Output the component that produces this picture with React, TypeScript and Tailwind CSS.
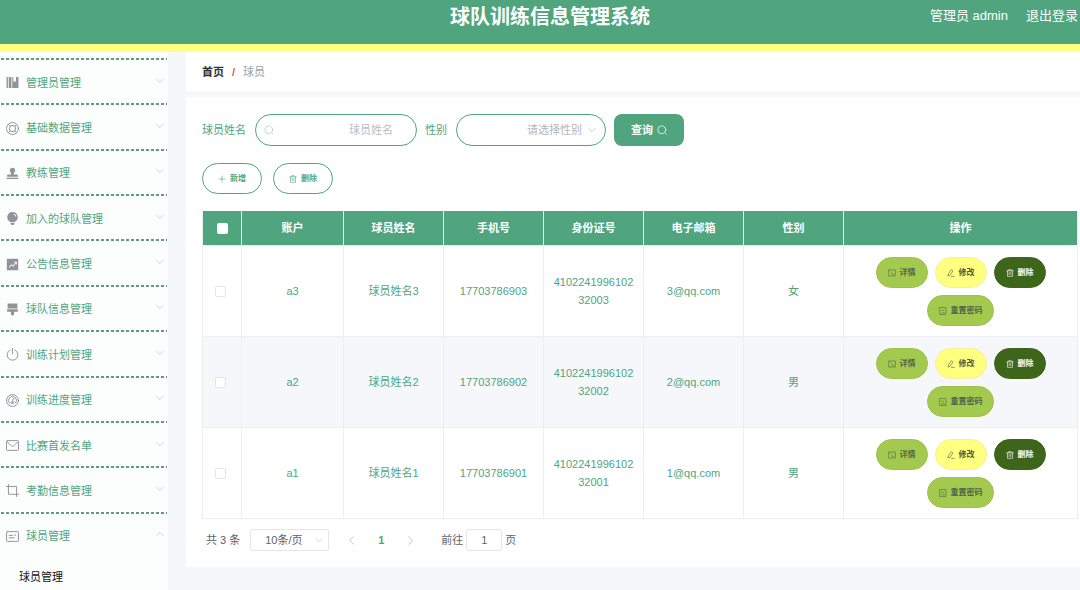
import type { ReactNode } from "react";

type IconProps = { className?: string; children?: ReactNode };

function Line({ className = "size-3", children }: IconProps) {
  return (
    <svg viewBox="0 0 24 24" className={className} fill="none" stroke="currentColor" strokeWidth="1.8" strokeLinecap="round" strokeLinejoin="round" aria-hidden="true">
      {children}
    </svg>
  );
}

function Solid({ className = "size-3", children }: IconProps) {
  return (
    <svg viewBox="0 0 24 24" className={className} fill="currentColor" aria-hidden="true">
      {children}
    </svg>
  );
}

const menuIcon = "size-[13px] shrink-0 text-[#909399]";

const menu: { label: string; icon: ReactNode }[] = [
  {
    label: "管理员管理",
    icon: (
      <Solid className={menuIcon}>
        <path d="M1 2h2.500v20H1zM5 2h5v20H5zM11.500 2h2v9l2.500-2 2.500 2V2H23v20H11.500z" />
      </Solid>
    ),
  },
  {
    label: "基础数据管理",
    icon: (
      <Line className={menuIcon}>
        <circle cx="12" cy="12" r="11" />
        <rect x="6.500" y="6.500" width="11" height="11" rx="4.500" />
        <path d="M4.500 4.500l3.500 3.500M19.500 4.500L16 8M4.500 19.500L8 16M19.500 19.500L16 16" />
      </Line>
    ),
  },
  {
    label: "教练管理",
    icon: (
      <Solid className={menuIcon}>
        <path d="M12 1.500a5 5 0 0 1 5 5c0 2.500-2.500 3.500-2.500 6V14H20a2 2 0 0 1 2 2v2H2v-2a2 2 0 0 1 2-2h5.500v-1.500c0-2.500-2.500-3.500-2.500-6a5 5 0 0 1 5-5zM1 20h22v2.200H1z" />
      </Solid>
    ),
  },
  {
    label: "加入的球队管理",
    icon: (
      <Solid className={menuIcon}>
        <path fillRule="evenodd" d="M12 0a9.500 9.500 0 0 1 5.500 17.300L16 19H8l-1.500-1.700A9.500 9.500 0 0 1 12 0zm2 3v1.800c2 .5 3 2 3.200 3.700H19C19 5.500 17 3.500 14 3zM8.500 20.300h7V22l-2 2h-3l-2-2z" />
      </Solid>
    ),
  },
  {
    label: "公告信息管理",
    icon: (
      <Solid className={menuIcon}>
        <path fillRule="evenodd" d="M1.500 1.500h21v21h-21zm3.500 15l1.200 1.200 4.300-4 3 2.300 5-6.500v2.300H20V7h-5v1.500h2.500l-4.200 5.300-3-2.300z" />
      </Solid>
    ),
  },
  {
    label: "球队信息管理",
    icon: (
      <Solid className={menuIcon}>
        <path d="M3 1h18v9H3zM2 11.500h20V16h-7v5l-3 2.500L9 21v-5H2z" />
      </Solid>
    ),
  },
  {
    label: "训练计划管理",
    icon: (
      <Line className={menuIcon}>
        <path d="M12 1v10M7.500 3.500a10 10 0 1 0 9 0" />
      </Line>
    ),
  },
  {
    label: "训练进度管理",
    icon: (
      <Line className={menuIcon}>
        <circle cx="12" cy="12" r="11" />
        <path d="M6.500 17a7.500 7.500 0 1 1 11 0M13.500 8l-1 6" />
        <circle cx="11.500" cy="16" r="2" />
      </Line>
    ),
  },
  {
    label: "比赛首发名单",
    icon: (
      <Line className={menuIcon}>
        <rect x="1" y="3" width="22" height="18" rx="1.500" />
        <path d="M2 5l6.500 6.500c2.500 2.500 4.500 2.500 7 0L22 5" />
      </Line>
    ),
  },
  {
    label: "考勤信息管理",
    icon: (
      <Line className={menuIcon}>
        <path d="M4.500 1v18H23M1 4.500h18.500V23" />
      </Line>
    ),
  },
  {
    label: "球员管理",
    icon: (
      <Line className={menuIcon}>
        <rect x="1" y="3" width="22" height="18" rx="1.500" />
        <path d="M6 10h6M6 14.500h9M16 9.500h2" />
      </Line>
    ),
  },
];

function Chevron({ dir, className = "size-2" }: { dir: "up" | "down" | "left" | "right"; className?: string }) {
  const paths = {
    down: "M2 7l10 10L22 7",
    up: "M2 17L12 7l10 10",
    left: "M17 2L7 12l10 10",
    right: "M7 2l10 10L7 22",
  };
  return (
    <Line className={className}>
      <path d={paths[dir]} />
    </Line>
  );
}

const SearchIcon = ({ className }: IconProps) => (
  <Line className={className}>
    <circle cx="11.500" cy="11.500" r="9.500" />
    <path d="M18 18l4 4" />
  </Line>
);
const TrashIcon = () => (
  <Line className="size-2">
    <path d="M2 5.500h20M8 5V2h8v3M4.500 6v16h15V6M9.500 10v7M14.500 10v7" />
  </Line>
);
const DetailIcon = () => (
  <Line className="size-2">
    <path d="M2 3h20v18H2zM7 8l4 4M12 16h5" />
  </Line>
);
const ResetIcon = () => (
  <Line className="size-2">
    <path d="M3 1.500h18v21H3zM8 8l3.500 4 3-2M8 17.500h8" />
  </Line>
);
const EditIcon = () => (
  <Line className="size-2">
    <path d="M3 20l1.500-6L13 2l5 4L9.500 18zM13 22h9" />
  </Line>
);

const players = [
  { account: "a3", name: "球员姓名3", phone: "17703786903", id: "410224199610232003", mail: "3@qq.com", sex: "女" },
  { account: "a2", name: "球员姓名2", phone: "17703786902", id: "410224199610232002", mail: "2@qq.com", sex: "男" },
  { account: "a1", name: "球员姓名1", phone: "17703786901", id: "410224199610232001", mail: "1@qq.com", sex: "男" },
];

const columns = ["账户", "球员姓名", "手机号", "身份证号", "电子邮箱", "性别", "操作"];

const pill = "flex h-[31px] items-center justify-center gap-1 rounded-full border text-[8px] font-bold";

export default function App() {
  return (
    <div className="flex min-h-screen flex-col bg-[#f5f7f9] font-['Liberation_Sans','Noto_Sans_CJK_SC',sans-serif] text-[11px] leading-4 text-[#50a57e]">
      <header className="grid h-[52px] grid-cols-[1fr_auto_1fr] border-b-8 border-[#ffff80] bg-[#50a57e] text-white">
        <h1 className="col-start-2 ml-5 pt-[5px] text-[20px] leading-6 font-bold">球队训练信息管理系统</h1>
        <div className="flex items-start justify-end gap-[18px] pt-2 pr-[2px] text-[13px] leading-4">
          <span>管理员 admin</span>
          <a href="#logout">退出登录</a>
        </div>
      </header>

      <div className="flex flex-1">
        <aside className="w-[168px] shrink-0 bg-[#fcfdfd] pt-[6px]">
          <nav>
            <ul className="grid h-[499px] auto-rows-fr px-px">
              {menu.map(({ label, icon }, i) => (
                <li key={label} className="bg-[repeating-linear-gradient(90deg,#5a9d80_0_3px,transparent_3px_5px)] bg-[length:100%_2px] bg-no-repeat">
                  <button type="button" aria-expanded={i === 10} className="flex h-full w-full items-center gap-[7px] pt-1 pr-[3px] pl-[5px]">
                    {icon}
                    <span className="flex-1 text-left">{label}</span>
                    <span className="pb-1 text-[#b0b3b8]">
                      <Chevron dir={i === 10 ? "up" : "down"} />
                    </span>
                  </button>
                </li>
              ))}
            </ul>
            <a href="#players" className="block py-3 pl-[19px] text-[#111]">球员管理</a>
          </nav>
        </aside>

        <main className="ml-[18px] min-w-0 flex-1">
          <nav aria-label="breadcrumb" className="mb-[6px] flex h-[39px] items-center gap-2 bg-white px-4">
            <a href="#home" className="font-bold text-[#303133]">首页</a>
            <span className="font-bold text-[#d9603b]">/</span>
            <span className="text-[#999fa8]">球员</span>
          </nav>

          <section className="bg-white pt-[17px] pr-[2px] pb-4 pl-4">
            <form className="flex items-center" onSubmit={(e) => e.preventDefault()}>
              <label htmlFor="name" className="mr-[9px]">球员姓名</label>
              <div className="mr-2 flex h-8 w-[162px] items-center rounded-full border border-[#50a57e] pr-[23px] pl-2">
                <SearchIcon className="size-[10px] shrink-0 text-[#c0c4cc]" />
                <input id="name" placeholder="球员姓名" className="w-full min-w-0 bg-transparent text-right outline-none placeholder:text-[#b9bcc2]" />
              </div>
              <label htmlFor="sex" className="mr-[9px]">性别</label>
              <div className="mr-2 grid h-8 w-[150px] items-center rounded-full border border-[#50a57e]">
                <select id="sex" defaultValue="" className="col-start-1 row-start-1 h-full w-full appearance-none rounded-full bg-transparent pl-[70px] text-[#b2b5bb] outline-none">
                  <option value="">请选择性别</option>
                  <option>男</option>
                  <option>女</option>
                </select>
                <span className="pointer-events-none col-start-1 row-start-1 mr-[9px] justify-self-end text-[#b0b3b8]">
                  <Chevron dir="down" />
                </span>
              </div>
              <button type="submit" className="flex h-8 w-[70px] items-center justify-center gap-1 rounded-lg bg-[#50a57e] font-bold text-white">
                查询
                <SearchIcon className="size-[10px]" />
              </button>
            </form>

            <div className="my-[17px] flex gap-[11px]">
              <button type="button" className={`${pill} w-[60px] border-[#50a57e]`}>
                <Line className="size-2">
                  <path d="M12 3v18M3 12h18" />
                </Line>
                新增
              </button>
              <button type="button" className={`${pill} w-[60px] border-[#50a57e]`}>
                <TrashIcon />
                删除
              </button>
            </div>

            <table className="w-full table-fixed border-separate border-spacing-0 border-l border-[#ebeef5] text-center">
              <colgroup>
                <col className="w-[39px]" />
                <col className="w-[102px]" />
                <col className="w-[100px]" />
                <col className="w-[100px]" />
                <col className="w-[100px]" />
                <col className="w-[100px]" />
                <col className="w-[100px]" />
                <col />
              </colgroup>
              <thead>
                <tr className="h-[35px] bg-[#50a57e] text-white">
                  <th className="border-r border-b border-[#ebeef5]">
                    <input type="checkbox" aria-label="全选" className="mx-auto block size-[11px] appearance-none rounded-xs bg-white" />
                  </th>
                  {columns.map((c) => (
                    <th key={c} className="border-r border-b border-[#ebeef5] font-bold">{c}</th>
                  ))}
                </tr>
              </thead>
              <tbody className="[&_td]:border-r [&_td]:border-b [&_td]:border-[#ebeef5]">
                {players.map((p) => (
                  <tr key={p.account} className="even:bg-[#f5f7fa]">
                    <td className="pr-[3px]">
                      <input type="checkbox" aria-label={p.account} className="mx-auto block size-[11px] appearance-none rounded-xs border border-[#e2e5ea] bg-white" />
                    </td>
                    <td>{p.account}</td>
                    <td>{p.name}</td>
                    <td>{p.phone}</td>
                    <td className="px-2 leading-[18px] break-all">{p.id}</td>
                    <td>{p.mail}</td>
                    <td>{p.sex}</td>
                    <td className="pt-[11px] pb-[10px]">
                      <div className="mx-auto flex max-w-[190px] flex-wrap justify-center gap-[7px]">
                        <button type="button" className={`${pill} w-[52px] border-[#9dc34b] bg-[#a3c94e] text-[#50664a]`}>
                          <DetailIcon />
                          详情
                        </button>
                        <button type="button" className={`${pill} w-[52px] border-[#f5f0a0] bg-[#ffff80] text-[#55583a]`}>
                          <EditIcon />
                          修改
                        </button>
                        <button type="button" className={`${pill} w-[52px] border-[#3d661b] bg-[#3d661b] text-white`}>
                          <TrashIcon />
                          删除
                        </button>
                        <button type="button" className={`${pill} w-[67px] border-[#9dc34b] bg-[#a3c94e] text-[#50664a]`}>
                          <ResetIcon />
                          重置密码
                        </button>
                      </div>
                    </td>
                  </tr>
                ))}
              </tbody>
            </table>

            <div className="mt-[10px] flex items-center pl-1 text-[#606266]">
              <span className="mr-[10px]">共 3 条</span>
              <div className="mr-[18px] grid h-[22px] w-[79px] items-center rounded-xs border border-[#e2e5ea]">
                <select aria-label="每页条数" className="col-start-1 row-start-1 h-full w-full appearance-none bg-transparent pl-[14px] outline-none">
                  <option>10条/页</option>
                  <option>20条/页</option>
                </select>
                <span className="pointer-events-none col-start-1 row-start-1 mr-[5px] justify-self-end text-[#c0c4cc]">
                  <Chevron dir="down" />
                </span>
              </div>
              <button type="button" aria-label="上一页" className="text-[#a8abb2]"><Chevron dir="left" className="size-[9px]" /></button>
              <button type="button" className="mx-[22px] font-bold text-[#50a57e]">1</button>
              <button type="button" aria-label="下一页" className="text-[#a8abb2]"><Chevron dir="right" className="size-[9px]" /></button>
              <label htmlFor="page" className="mr-[3px] ml-[26px]">前往</label>
              <input id="page" defaultValue="1" className="mr-[3px] h-[22px] w-9 rounded-xs border border-[#e2e5ea] text-center outline-none" />
              <span>页</span>
            </div>
          </section>
        </main>
      </div>
    </div>
  );
}
